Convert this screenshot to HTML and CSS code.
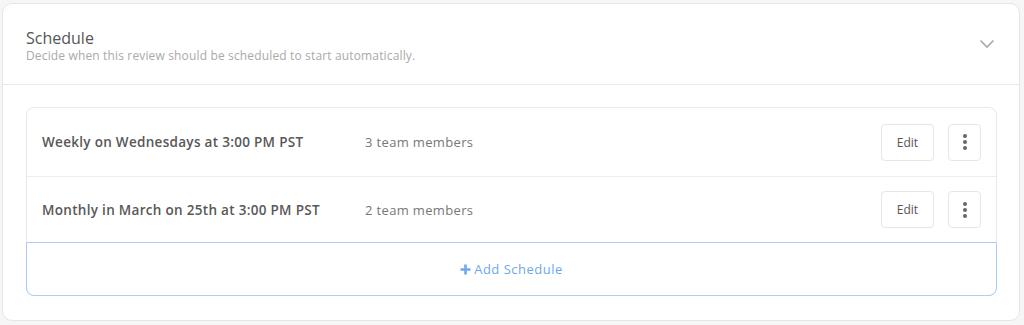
FILE: index.html
```html
<!DOCTYPE html>
<html>
<head>
  <title>Schedule</title>
<link rel="stylesheet" href="styles.css">
</head>

<body>

<div class='card'>
  <div class='card-head'>
    <div class='head-text'>
      <h2>Schedule</h2>
      <p>Decide when this review should be scheduled to start automatically.</p>
    </div>
    <svg class='chevron' width='16' height='10' viewBox='0 0 16 10'>
      <path d='M1.5 1.5 L8 8 L14.5 1.5' fill='none' stroke='#a9a9a9' stroke-width='1.6'/>
    </svg>
  </div>
  <div class='card-body'>
    <div class='list'>
      <div class='row'>
        <span class='when'>Weekly on Wednesdays at 3:00 PM PST</span>
        <span class='who'>3 team members</span>
        <button class='btn'>Edit</button>
        <button class='btn more'><i></i><i></i><i></i></button>
      </div>
      <div class='row'>
        <span class='when'>Monthly in March on 25th at 3:00 PM PST</span>
        <span class='who'>2 team members</span>
        <button class='btn'>Edit</button>
        <button class='btn more'><i></i><i></i><i></i></button>
      </div>
      <div class='add'>
        <svg class='plus' width='11' height='11' viewBox='0 0 11 11'>
          <path d='M5.5 0.5 V10.5 M0.5 5.5 H10.5' stroke='#6ea8ec' stroke-width='2.6'/>
        </svg>
        Add Schedule
      </div>
    </div>
  </div>
</div>

</body>
</html>
```

FILE: styles.css
```css
html, body {
  background: #f6f6f6;
}
body {
  font-family: 'Open Sans', sans-serif;
  margin: 0;
  padding: 3px 4px 4px 2px;
}
.card {
  background: #fff;
  border: 1px solid #e6e6e6;
  border-radius: 10px;
  height: 316px;
}
.card-head {
  display: flex;
  align-items: center;
  justify-content: space-between;
  height: 80px;
  padding: 0 24px 0 23px;
  border-bottom: 1px solid #e9e9e9;
}
.head-text {
  padding-top: 3px;
}
.card-head h2 {
  margin: 0;
  font-size: 16px;
  line-height: 20px;
  font-weight: 400;
  color: #555;
}
.card-head p {
  margin: 0;
  font-size: 12px;
  line-height: 15px;
  letter-spacing: 0.15px;
  color: #aaa;
}
.card-body {
  padding: 22px 22px 0 23px;
}
.list {
  border: 1px solid #e9e9e9;
  border-radius: 8px;
}
.row {
  display: flex;
  align-items: center;
  height: 68px;
  padding: 0 15px 0 15px;
  border-bottom: 1px solid #ededed;
}
.row + .row {
  height: 65px;
  border-bottom: none;
}
.when {
  width: 323px;
  font-size: 13.5px;
  letter-spacing: 0.3px;
  font-weight: 600;
  color: #585858;
}
.who {
  flex: 1;
  font-size: 13px;
  letter-spacing: 0.35px;
  color: #777;
}
.btn {
  height: 37px;
  width: 53px;
  border: 1px solid #e6e6e6;
  border-radius: 4px;
  background: #fff;
  font-family: inherit;
  font-size: 12px;
  color: #555;
  display: flex;
  align-items: center;
  justify-content: center;
}
.more {
  width: 33px;
  margin-left: 14px;
  flex-direction: column;
  gap: 2px;
}
.more i {
  width: 4px;
  height: 4px;
  border-radius: 50%;
  background: #666;
}
.add {
  margin: 0 -1px -1px;
  height: 52px;
  border: 1px solid #a9cdf6;
  border-radius: 0 0 8px 8px;
  display: flex;
  align-items: center;
  justify-content: center;
  font-size: 13px;
  letter-spacing: 0.5px;
  color: #6ea8ec;
}
.plus {
  margin-right: 3px;
}
```
